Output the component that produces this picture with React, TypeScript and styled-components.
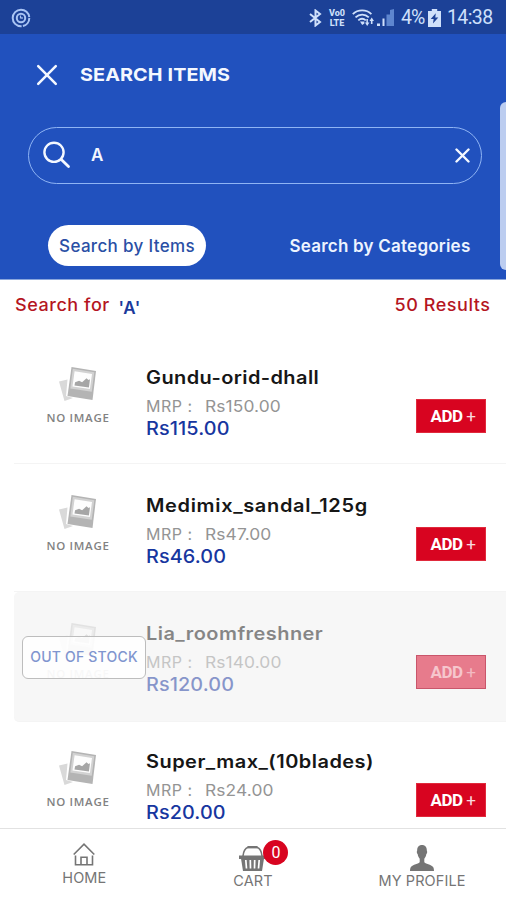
import React from "react";
import styled, { createGlobalStyle } from "styled-components";

const GlobalStyle = createGlobalStyle`
  *, *::before, *::after { box-sizing: border-box; }
  body { margin: 0; background: #fff; font-family: Inter, "Open Sans", sans-serif; }
  button { font: inherit; border: 0; padding: 0; background: none; }
  svg { display: block; flex: none; }
`;

const Screen = styled.div`
  position: relative;
  display: flex;
  flex-direction: column;
  width: 506px;
  height: 900px;
  overflow: hidden;
  background: #fff;
`;

const StatusBar = styled.div`
  display: flex;
  justify-content: space-between;
  align-items: center;
  flex: none;
  height: 34px;
  padding: 1px 13px 0 11px;
  background: #1c4197;
  color: #cfe0fb;
`;

const StatusIcons = styled.div`
  display: flex;
  align-items: center;
  font-family: Roboto, sans-serif;
`;

const VoLte = styled.div`
  display: flex;
  flex-direction: column;
  width: 18px;
  margin: 0 6px;
  font-size: 9px;
  font-weight: 800;
  line-height: 10px;
  text-align: center;
`;

const StatusText = styled.span<{ $width: number; $left: number; $track: number }>`
  width: ${(p) => p.$width}px;
  margin-left: ${(p) => p.$left}px;
  font-size: 19.5px;
  line-height: 24px;
  letter-spacing: ${(p) => p.$track}px;
  white-space: nowrap;
`;

const Header = styled.header`
  display: flex;
  flex-direction: column;
  flex: none;
  height: 246px;
  background: #2151be;
  border-bottom: 1px solid #8aa6dc;
  color: #f4f8ff;
`;

const TitleRow = styled.div`
  display: flex;
  align-items: center;
  height: 81px;
  padding-left: 36px;
`;

const Title = styled.h1`
  margin: 0 0 0 22px;
  font-size: 18px;
  font-weight: 700;
  line-height: 24px;
  letter-spacing: 0.1px;
  transform: scaleX(1.098);
  transform-origin: left;
`;

const SearchBox = styled.div`
  display: flex;
  align-items: center;
  width: 454px;
  height: 57px;
  margin: 12px 0 0 28px;
  padding: 0 11px 1px 14px;
  border: 1.5px solid #8fb4f4;
  border-radius: 29px;
`;

const Query = styled.span`
  flex: 1;
  margin-left: 20px;
  font-size: 17px;
  font-weight: 600;
  line-height: 24px;
`;

const Tabs = styled.div`
  display: flex;
  justify-content: space-between;
  margin: 41px 35px 0 48px;
`;

const Tab = styled.button<{ $active?: boolean }>`
  width: ${(p) => (p.$active ? 158 : 182)}px;
  height: 41px;
  border-radius: 21px;
  background: ${(p) => (p.$active ? "#fff" : "transparent")};
  color: ${(p) => (p.$active ? "#2a4fa5" : "#edf4ff")};
  font-size: 17px;
  font-weight: ${(p) => (p.$active ? 500 : 600)};
  letter-spacing: ${(p) => (p.$active ? 0.33 : 0.22)}px;
  white-space: nowrap;
`;

const ScrollThumb = styled.div`
  position: absolute;
  top: 102px;
  right: -6px;
  width: 12px;
  height: 168px;
  border-radius: 6px;
  background: #bccdf0;
`;

const Summary = styled.div`
  display: flex;
  flex: none;
  height: 56px;
  padding: 13px 16px 0 15px;
  color: #b5161f;
  font-size: 17px;
  font-weight: 500;
  line-height: 24px;
  letter-spacing: 0.5px;
`;

const SummaryText = styled.span<{ $end?: boolean }>`
  transform: scaleX(1.06);
  transform-origin: ${(p) => (p.$end ? "right" : "left")};
`;

const SummaryTerm = styled.span`
  flex: 1;
  margin: 3px 0 0 14px;
  color: #1c3a9c;
  font-weight: 600;
`;

const List = styled.main`
  flex: none;
  height: 492px;
  overflow: hidden;
`;

const Row = styled.article<{ $muted?: boolean }>`
  position: relative;
  display: grid;
  grid-template-columns: 132px 1fr 70px;
  height: 128px;
  margin-left: 14px;
  padding-right: 20px;
  border-bottom: 1px solid #f4f4f4;
  border-radius: ${(p) => (p.$muted ? "5px 0 0 5px" : "0")};
  background: ${(p) => (p.$muted ? "#f7f7f7" : "transparent")};
  ${(p) => p.$muted && "height: 130px; margin-bottom: -2px;"}
`;

const Thumb = styled.div<{ $muted?: boolean }>`
  display: flex;
  flex-direction: column;
  align-items: center;
  padding: 31px 4px 0 0;
  color: #828282;
  font-family: "Open Sans", sans-serif;
  font-size: 11.5px;
  font-weight: 600;
  line-height: 16px;
  letter-spacing: 0.7px;
  opacity: ${(p) => (p.$muted ? 0.3 : 1)};
`;

const ThumbLabel = styled.span`
  margin-top: 8px;
`;

const Details = styled.div<{ $muted?: boolean }>`
  display: flex;
  flex-direction: column;
  align-items: flex-start;
  padding-top: 31px;
  line-height: 22px;
  white-space: nowrap;
  opacity: ${(p) => (p.$muted ? 0.5 : 1)};
`;

const Name = styled.h2<{ $track: number }>`
  margin: 0;
  color: #161616;
  font-size: 18px;
  font-weight: 600;
  line-height: 22px;
  letter-spacing: ${(p) => p.$track}px;
  transform: scaleX(1.11);
  transform-origin: left;
`;

const Mrp = styled.span`
  display: flex;
  margin-top: 6px;
  color: #949494;
  font-size: 16px;
`;

const MrpLabel = styled.span`
  width: 59px;
  letter-spacing: 0.5px;
`;

const MrpValue = styled.span`
  letter-spacing: 0.1px;
  transform: scaleX(1.085);
  transform-origin: left;
`;

const Price = styled.span`
  color: #17369f;
  font-size: 18.5px;
  font-weight: 500;
  letter-spacing: 0.1px;
  transform: scaleX(1.07);
  transform-origin: left;
`;

const AddButton = styled.button<{ $muted?: boolean }>`
  width: 70px;
  height: 34px;
  margin-top: 63px;
  padding-left: 4px;
  border: 1px solid ${(p) => (p.$muted ? "#c9566b" : "#e02a3c")};
  background: ${(p) => (p.$muted ? "#e77b8c" : "#d80420")};
  color: ${(p) => (p.$muted ? "#f6c6cd" : "#fff")};
  font-family: Roboto, sans-serif;
  font-size: 17px;
  font-weight: 700;
  letter-spacing: -0.5px;
  white-space: nowrap;
`;

const Plus = styled.span`
  font-weight: 400;
  opacity: 0.85;
`;

const StockBadge = styled.span`
  position: absolute;
  top: 44px;
  left: 8px;
  width: 124px;
  height: 43px;
  border: 1.5px solid #bdbdbd;
  border-radius: 6px;
  background: rgba(255, 255, 255, 0.82);
  color: #8095cf;
  font-size: 14px;
  font-weight: 500;
  line-height: 40px;
  letter-spacing: 0.2px;
  text-align: center;
  white-space: nowrap;
`;

const NavBar = styled.nav`
  display: grid;
  grid-template-columns: repeat(3, 1fr);
  height: 72px;
  border-top: 1px solid #e2e2e2;
  background: #fff;
`;

const NavItem = styled.div<{ $top: number; $gap?: number }>`
  display: flex;
  flex-direction: column;
  align-items: center;
  gap: ${(p) => p.$gap ?? 0}px;
  padding-top: ${(p) => p.$top}px;
  color: #757575;
  font-size: 14px;
  line-height: 20px;
`;

const NavLabel = styled.span`
  letter-spacing: 0.1px;
  transform: scaleX(1.035);
`;

const IconHolder = styled.div`
  position: relative;
`;

const CartBadge = styled.span`
  position: absolute;
  top: -5px;
  left: 24px;
  width: 25px;
  height: 25px;
  border-radius: 50%;
  background: #d80420;
  color: #fff;
  font-family: Roboto, sans-serif;
  font-size: 16px;
  line-height: 25px;
  text-align: center;
`;

const CloseIcon = ({ size, weight }: { size: number; weight: number }) => (
  <svg width={size} height={size} viewBox="0 0 20 20" fill="none" stroke="currentColor" strokeWidth={weight} strokeLinecap="round">
    <path d="M2 2 18 18M18 2 2 18" />
  </svg>
);

const RingIcon = () => (
  <svg width="20" height="20" viewBox="0 0 20 20" fill="none" stroke="#a9c4f4">
    <circle cx="10" cy="10" r="8.3" strokeWidth="2" strokeDasharray="11 1.3 38.5 1.3" />
    <circle cx="10" cy="10" r="4.2" strokeWidth="2" />
    <path d="M9.5 7.500v3M11 9v2" strokeWidth="1.200" />
  </svg>
);

const BluetoothIcon = () => (
  <svg width="13" height="18" viewBox="0 0 13 18" fill="none" stroke="currentColor" strokeWidth="2">
    <path d="M1 5 11 13 6.500 16.500v-15L11 5 1 13" />
  </svg>
);

const WifiIcon = () => (
  <svg width="23" height="18" viewBox="0 0 23 18" fill="none" stroke="currentColor" strokeWidth="1.800">
    <path d="M.8 5.200C5.800.2 14.500.2 19.400 5.200M3.500 8.300c3.800-3.700 9.600-3.700 13.300 0M6.300 11.400c2.200-2 5.300-2 7.500 0" />
    <path d="M8 12.400h4.400v2.200l-2.200 1.400z" fill="currentColor" stroke="none" />
    <path d="M13 13.600h1.400V10h1.500v3.600h1.500L15.200 17zM17.500 12l2.200-3.600L22 12h-1.500v3h-1.600v-3z" fill="currentColor" stroke="none" />
  </svg>
);

const SignalShape = styled.svg`
  margin-left: 2px;
`;

const SignalIcon = () => (
  <SignalShape width="17" height="17" viewBox="0 0 17 17">
    <path d="M0 14.500h3V17H0zM5.500 9.500h2V17h-2z" fill="#cfe0fb" />
    <path d="M9.500 5.500H13V17H9.500zM13 1l4-1v17h-4z" fill="#5e86cf" />
  </SignalShape>
);

const BatteryIcon = () => (
  <svg width="13" height="18" viewBox="0 0 12 18" preserveAspectRatio="none">
    <path d="M3.500 0h5v2H12v16H0V2h3.500z" fill="#cfe0fb" />
    <path d="M7.200 4.200 2.500 10h2.700l-.6 4.500L9.500 8.500H6.700z" fill="#1c4197" />
  </svg>
);

const SearchIcon = () => (
  <svg width="28" height="28" viewBox="0 0 28 28" fill="none" stroke="currentColor" strokeWidth="2.400" strokeLinecap="round">
    <circle cx="11" cy="11.300" r="9.600" />
    <path d="m18.300 18.500 7.200 7" strokeWidth="2.800" />
  </svg>
);

const PhotosIcon = () => (
  <svg width="38" height="35" viewBox="0 0 38 35">
    <path d="M0 14.500 8.500 12.500 7 29l7 2-8.500 3z" fill="#d9d9d9" />
    <path d="m12.500 0 24.500 4-3.500 29-25-4z" fill="#b4b4b4" />
    <path d="m13.800 1.700 21.500 3.500-2.600 19.600-21.400-3.300z" fill="#d2d2d2" />
    <path d="m15.600 4.200 17.400 2.700-2.100 15-17.400-2.500z" fill="#fdfdfd" />
    <path d="m15.500 18.500.6-3.300 4-1.500 3 1.600 4.400-4 2 1.800 1.500-.8-1.100 8.200z" fill="#a6a6a6" />
  </svg>
);

const HomeIcon = () => (
  <svg width="22" height="23" viewBox="0 0 22 23" fill="none" stroke="currentColor" strokeWidth="1.600">
    <path d="M.7 11.500 11 1.200 21.300 11.500M2.500 12.500v9.200H8v-7.500h6v7.500h5.500v-9.200M8 21.700h6" />
  </svg>
);

const BasketIcon = () => (
  <svg width="27" height="26" viewBox="0 0 27 26" fill="none" stroke="currentColor">
    <path d="M4 11C4.500 5.800 6.500 3 9 2.200M23 11c-.5-5.200-2.500-8-5-8.800" strokeWidth="1.600" />
    <path d="M8.500 2.200h10" strokeWidth="2.400" />
    <path d="M0 10.500h27v3.500H0z" fill="currentColor" stroke="none" />
    <path d="M2 13.500h23l-2 12.500H4z" fill="currentColor" stroke="none" />
    <path d="m6.800 15 .7 8.500M11.300 15l.2 8.500M15.700 15l-.2 8.500M20.200 15l-.7 8.500" stroke="#fff" strokeWidth="1.700" />
  </svg>
);

const ProfileIcon = () => (
  <svg width="24" height="26" viewBox="0 0 24 26" fill="currentColor">
    <path d="M12 0C8.800 0 7.200 2.200 7.200 5c0 1-.6 1.400-.3 2.700.2.900.7 1 .8 1.500.3 2 1 3.300 2 4.500v3.200c-.6 1.800-7.200 2.600-8.800 5.100C.3 23 0 24.500 0 26h24c0-1.500-.3-3-.9-4-1.600-2.500-8.200-3.300-8.800-5.100v-3.200c1-1.200 1.700-2.500 2-4.500.1-.5.600-.6.8-1.500.3-1.300-.3-1.700-.3-2.700 0-2.800-1.600-5-4.800-5z" />
  </svg>
);

interface Product {
  name: string;
  mrp: string;
  price: string;
  track: number;
  outOfStock?: boolean;
}

const products: Product[] = [
  { name: "Gundu-orid-dhall", mrp: "Rs150.00", price: "Rs115.00", track: 0.37 },
  { name: "Medimix_sandal_125g", mrp: "Rs47.00", price: "Rs46.00", track: 0.6 },
  { name: "Lia_roomfreshner", mrp: "Rs140.00", price: "Rs120.00", track: 0.4, outOfStock: true },
  { name: "Super_max_(10blades)", mrp: "Rs24.00", price: "Rs20.00", track: 0.42 },
];

const ProductRow = ({ name, mrp, price, track, outOfStock }: Product) => (
  <Row $muted={outOfStock}>
    <Thumb $muted={outOfStock}>
      <PhotosIcon />
      <ThumbLabel>NO IMAGE</ThumbLabel>
    </Thumb>
    <Details $muted={outOfStock}>
      <Name $track={track}>{name}</Name>
      <Mrp>
        <MrpLabel>MRP :</MrpLabel>
        <MrpValue>{mrp}</MrpValue>
      </Mrp>
      <Price>{price}</Price>
    </Details>
    <AddButton $muted={outOfStock}>
      ADD <Plus>+</Plus>
    </AddButton>
    {outOfStock && <StockBadge>OUT OF STOCK</StockBadge>}
  </Row>
);

export default function App() {
  return (
    <>
      <GlobalStyle />
      <Screen>
        <StatusBar>
          <RingIcon />
          <StatusIcons>
            <BluetoothIcon />
            <VoLte>
              <span>Vo0</span>
              <span>LTE</span>
            </VoLte>
            <WifiIcon />
            <SignalIcon />
            <StatusText $width={27} $left={7} $track={-0.9}>4%</StatusText>
            <BatteryIcon />
            <StatusText $width={46} $left={6} $track={-0.6}>14:38</StatusText>
          </StatusIcons>
        </StatusBar>
        <Header>
          <TitleRow>
            <CloseIcon size={22} weight={2.3} />
            <Title>SEARCH ITEMS</Title>
          </TitleRow>
          <SearchBox>
            <SearchIcon />
            <Query>A</Query>
            <CloseIcon size={15} weight={3.2} />
          </SearchBox>
          <Tabs>
            <Tab $active>Search by Items</Tab>
            <Tab>Search by Categories</Tab>
          </Tabs>
        </Header>
        <Summary>
          <SummaryText>Search for</SummaryText>
          <SummaryTerm>'A'</SummaryTerm>
          <SummaryText $end>50 Results</SummaryText>
        </Summary>
        <List>
          {products.map((p) => (
            <ProductRow key={p.name} {...p} />
          ))}
        </List>
        <NavBar>
          <NavItem $top={14} $gap={2}>
            <HomeIcon />
            <NavLabel>HOME</NavLabel>
          </NavItem>
          <NavItem $top={16}>
            <IconHolder>
              <BasketIcon />
              <CartBadge>0</CartBadge>
            </IconHolder>
            <NavLabel>CART</NavLabel>
          </NavItem>
          <NavItem $top={16}>
            <ProfileIcon />
            <NavLabel>MY PROFILE</NavLabel>
          </NavItem>
        </NavBar>
        <ScrollThumb />
      </Screen>
    </>
  );
}
